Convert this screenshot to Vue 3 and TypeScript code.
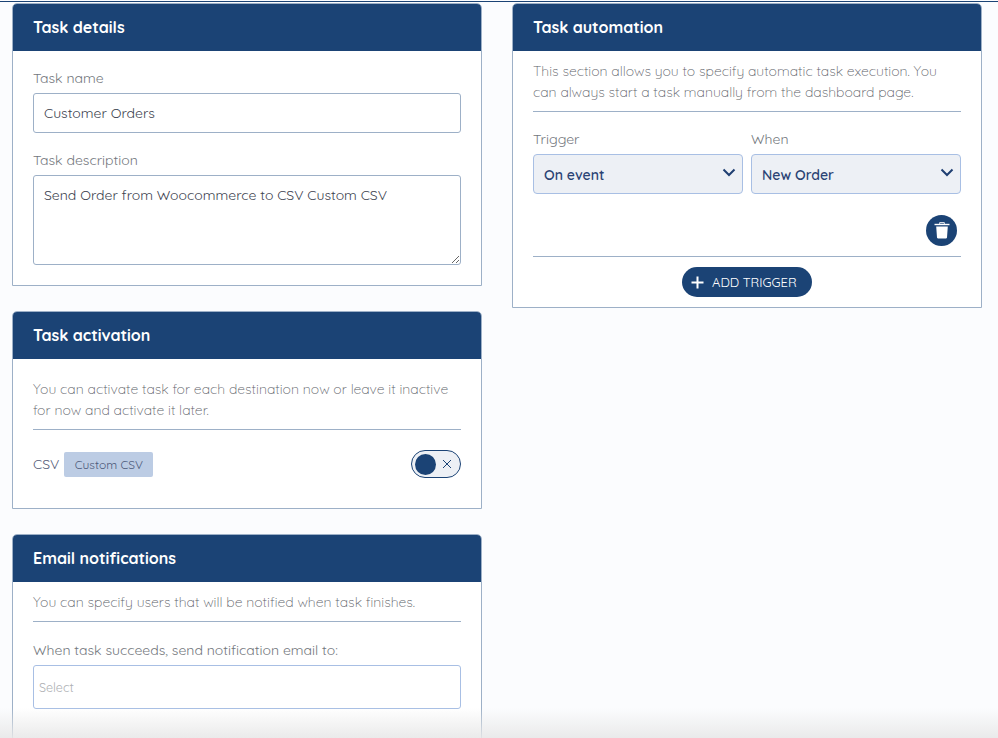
<script setup lang="ts">
import { ref } from 'vue'
const description = ref('Send Order from Woocommerce to CSV Custom CSV')
</script>

<template>
  <div class="page">
    <div class="columns">
      <div class="column">
        <section class="card details">
          <h2 class="card-title">Task details</h2>
          <div class="card-body">
            <label class="label" for="task-name">Task name</label>
            <input id="task-name" class="field" type="text" value="Customer Orders" />
            <label class="label second" for="task-desc">Task description</label>
            <textarea id="task-desc" class="field area" v-model="description"></textarea>
          </div>
        </section>

        <section class="card activation">
          <h2 class="card-title">Task activation</h2>
          <div class="card-body">
            <p class="hint">You can activate task for each destination now or leave it inactive for now and activate it later.</p>
            <hr class="rule" />
            <div class="dest">
              <span class="dest-name">CSV</span>
              <span class="tag">Custom CSV</span>
              <span class="toggle">
                <span class="knob"></span>
                <svg class="toggle-x" width="10" height="10" viewBox="0 0 10 10">
                  <path d="M1 1l8 8M9 1l-8 8" stroke="#1b4375" stroke-width="1" fill="none" />
                </svg>
              </span>
            </div>
          </div>
        </section>

        <section class="card email">
          <h2 class="card-title">Email notifications</h2>
          <div class="card-body">
            <p class="hint one">You can specify users that will be notified when task finishes.</p>
            <hr class="rule" />
            <div class="label success">When task succeeds, send notification email to:</div>
            <div class="multi">Select</div>
          </div>
        </section>
      </div>

      <div class="column">
        <section class="card automation">
          <h2 class="card-title">Task automation</h2>
          <div class="card-body">
            <p class="hint">This section allows you to specify automatic task execution. You can always start a task manually from the dashboard page.</p>
            <hr class="rule" />
            <div class="selects">
              <div class="select-col">
                <label class="label" for="trigger">Trigger</label>
                <div class="select-wrap">
                  <select id="trigger" class="select"><option>On event</option></select>
                  <svg class="chev" width="14" height="9" viewBox="0 0 14 9">
                    <path d="M1.5 1.5L7 7l5.5-5.5" stroke="#1f3f72" stroke-width="2" fill="none" />
                  </svg>
                </div>
              </div>
              <div class="select-col">
                <label class="label" for="when">When</label>
                <div class="select-wrap">
                  <select id="when" class="select"><option>New Order</option></select>
                  <svg class="chev" width="14" height="9" viewBox="0 0 14 9">
                    <path d="M1.5 1.5L7 7l5.5-5.5" stroke="#1f3f72" stroke-width="2" fill="none" />
                  </svg>
                </div>
              </div>
            </div>
            <div class="trash-row">
              <button class="trash" type="button" aria-label="Delete">
                <svg width="16" height="17" viewBox="0 0 16 17">
                  <path d="M0.5 1.8h15v1.4H0.5z" fill="#fff" />
                  <path d="M5.6 1.8V0.7h4.8v1.1" stroke="#fff" stroke-width="1" fill="none" />
                  <path d="M2.2 4.4h11.6l-.8 11.2c0 .5-.5.9-1 .9H4c-.5 0-1-.4-1-.9z" fill="#fff" />
                </svg>
              </button>
            </div>
            <hr class="rule tight" />
            <div class="add-row">
              <button class="add" type="button">
                <svg width="13" height="13" viewBox="0 0 13 13">
                  <path d="M6.5 0.5v12M0.5 6.5h12" stroke="#fff" stroke-width="2" fill="none" />
                </svg>
                <span>ADD TRIGGER</span>
              </button>
            </div>
          </div>
        </section>
      </div>
    </div>
    <div class="fade"></div>
  </div>
</template>

<style>
html, body { margin: 0; background: #fbfcfe; }
</style>

<style scoped>
.page {
  position: relative;
  height: 737px;
  margin-top: 1px;
  overflow: hidden;
  box-sizing: border-box;
  border-top: 1px solid #1b4375;
  padding: 1px 16px 0 12px;
  background: #fbfcfe;
  font-family: "Quicksand", "Nunito", "Lato", "Noto Sans", sans-serif;
  color: #4a4f5a;
}
.columns {
  display: grid;
  grid-template-columns: 470px 470px;
  column-gap: 30px;
  align-items: start;
}
.column {
  display: flex;
  flex-direction: column;
  gap: 25px;
}
.card {
  box-sizing: border-box;
  background: #fff;
  border: 1px solid #9db0c7;
  border-radius: 5px 5px 0 0;
}
.details { height: 283px; }
.activation { height: 198px; }
.email { height: 300px; }
.automation { height: 305px; }
.card-title {
  margin: 0;
  height: 47px;
  box-sizing: border-box;
  padding: 0 20px 2px;
  display: flex;
  align-items: center;
  background: #1b4375;
  color: #fff;
  border-radius: 4px 4px 0 0;
  font-size: 16px;
  font-weight: 700;
  line-height: 1;
}
.card-body { padding: 0 20px; }
.label {
  display: block;
  font-size: 14px;
  line-height: 20px;
  font-weight: 400;
  color: #73777d;
}
.details .card-body { padding-top: 17px; }
.field {
  display: block;
  width: 100%;
  box-sizing: border-box;
  height: 40px;
  margin-top: 5px;
  padding: 0 10px;
  border: 1px solid #9db0c7;
  border-radius: 3px;
  background: #fff;
  font: inherit;
  font-size: 14px;
  color: #3d4350;
  outline: none;
}
.second { margin-top: 17px; }
.area {
  height: 90px;
  padding: 9px 10px;
  line-height: 20px;
}
.hint {
  margin: 0;
  padding-top: 20px;
  font-size: 14px;
  font-weight: 300;
  line-height: 21px;
  color: #5c6168;
}
.automation .hint { padding-top: 10px; }
.email .hint { padding-top: 10px; }
.rule {
  margin: 8px 0 0;
  border: 0;
  border-top: 1px solid #9db0c7;
}
.dest {
  display: flex;
  align-items: center;
  margin-top: 19px;
  height: 30px;
}
.dest-name { font-size: 14px; color: #56607a; }
.tag {
  margin-left: 5px;
  width: 89px;
  height: 25px;
  display: flex;
  align-items: center;
  justify-content: center;
  background: #bccce4;
  border-radius: 2px;
  font-size: 12px;
  color: #4d5a7a;
}
.toggle {
  margin-left: auto;
  width: 50px;
  height: 28px;
  box-sizing: border-box;
  display: flex;
  align-items: center;
  padding: 0 8px 0 3px;
  justify-content: space-between;
  background: #edf0f5;
  border: 1px solid #1b4375;
  border-radius: 14px;
}
.knob {
  width: 21px;
  height: 21px;
  border-radius: 50%;
  background: #1b4375;
}
.toggle-x { display: block; }
.success { margin-top: 18px; }
.multi {
  box-sizing: border-box;
  height: 44px;
  margin-top: 5px;
  padding-left: 5px;
  display: flex;
  align-items: center;
  border: 1px solid #a8bfe4;
  border-radius: 3px;
  font-size: 12.5px;
  color: #aeb0b3;
}
.selects {
  display: grid;
  grid-template-columns: 1fr 1fr;
  column-gap: 8px;
  margin-top: 17px;
}
.select-wrap { position: relative; margin-top: 5px; }
.select {
  display: block;
  width: 100%;
  height: 40px;
  box-sizing: border-box;
  appearance: none;
  padding: 2px 10px 0;
  border: 1px solid #a8bfe4;
  border-radius: 4px;
  background: #edf0f5;
  font: inherit;
  font-size: 14px;
  font-weight: 600;
  color: #2a4374;
  outline: none;
}
.chev {
  position: absolute;
  right: 7px;
  top: 14px;
  pointer-events: none;
}
.trash-row {
  display: flex;
  justify-content: flex-end;
  padding: 21px 4px 0 0;
}
.trash {
  width: 31px;
  height: 31px;
  padding: 0;
  border: 0;
  border-radius: 50%;
  background: #1b4375;
  display: flex;
  align-items: center;
  justify-content: center;
}
.rule.tight { margin-top: 10px; }
.add-row {
  display: flex;
  justify-content: center;
  margin-top: 10px;
}
.add {
  width: 130px;
  height: 30px;
  box-sizing: border-box;
  padding: 1px 0 0 9px;
  border: 0;
  border-radius: 15px;
  background: #1b4375;
  color: #fff;
  display: flex;
  align-items: center;
  gap: 8px;
  font: inherit;
  font-size: 13px;
  line-height: 1;
}
.fade {
  position: absolute;
  left: 0;
  right: 0;
  bottom: 0;
  height: 30px;
  background: linear-gradient(to bottom, rgba(232, 232, 232, 0), rgba(232, 232, 232, 0.9));
  pointer-events: none;
}
</style>
